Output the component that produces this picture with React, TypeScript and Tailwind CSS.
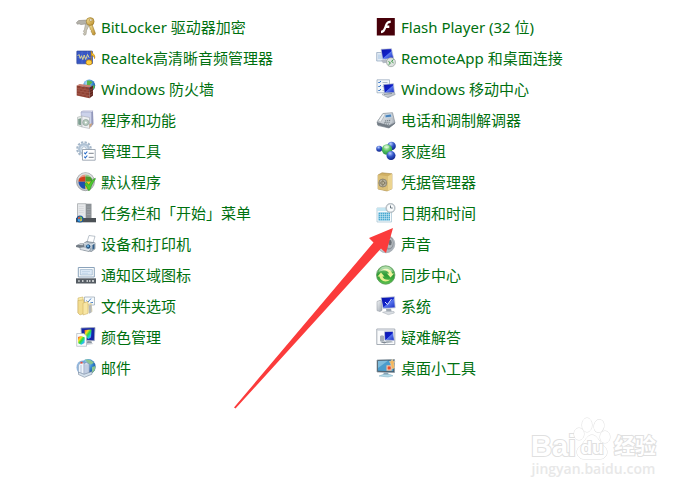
import type { ReactNode } from "react";

type Item = { label: string; icon: ReactNode };

function Icon({ children }: { children: ReactNode }) {
  return (
    <svg viewBox="0 0 20 20" className="size-5 shrink-0" aria-hidden="true">
      {children}
    </svg>
  );
}

function SharedGradients() {
  return (
    <svg className="absolute size-0" aria-hidden="true">
      <defs>
        <linearGradient id="screen" x1="0" y1="0" x2="1" y2="1">
          <stop offset="0" stopColor="#0a14a8" />
          <stop offset="0.5" stopColor="#1020c8" />
          <stop offset="0.55" stopColor="#5a78ee" />
          <stop offset="1" stopColor="#1426c0" />
        </linearGradient>
        <linearGradient id="silver" x1="0" y1="0" x2="1" y2="1">
          <stop offset="0" stopColor="#f4f6f8" />
          <stop offset="1" stopColor="#9aa2ac" />
        </linearGradient>
        <linearGradient id="gold" x1="0" y1="0" x2="1" y2="1">
          <stop offset="0" stopColor="#f7e6a0" />
          <stop offset="1" stopColor="#b98a26" />
        </linearGradient>
        <linearGradient id="rainbow" x1="0" y1="0" x2="1" y2="1">
          <stop offset="0" stopColor="#f02a3a" />
          <stop offset="0.3" stopColor="#f8e020" />
          <stop offset="0.5" stopColor="#30d840" />
          <stop offset="0.75" stopColor="#20c8f0" />
          <stop offset="1" stopColor="#d028e0" />
        </linearGradient>
        <linearGradient id="syncDisc" x1="0" y1="0" x2="0" y2="1">
          <stop offset="0" stopColor="#8fd082" />
          <stop offset="0.5" stopColor="#2c9a34" />
          <stop offset="1" stopColor="#5cc24c" />
        </linearGradient>
        <radialGradient id="globe" cx="0.35" cy="0.3" r="0.8">
          <stop offset="0" stopColor="#c8ecff" />
          <stop offset="0.5" stopColor="#3d93d8" />
          <stop offset="1" stopColor="#0c3d8c" />
        </radialGradient>
        <radialGradient id="blueBall" cx="0.4" cy="0.25" r="0.8">
          <stop offset="0" stopColor="#b8ccff" />
          <stop offset="0.45" stopColor="#3458c8" />
          <stop offset="1" stopColor="#0a1c80" />
        </radialGradient>
        <radialGradient id="greenBall" cx="0.45" cy="0.3" r="0.8">
          <stop offset="0" stopColor="#d0f8c4" />
          <stop offset="0.5" stopColor="#4cbc5c" />
          <stop offset="1" stopColor="#1c8440" />
        </radialGradient>
      </defs>
    </svg>
  );
}

const keys = (
  <Icon>
    <path d="M.3 5.800 2.500 3.600l8.500-.6v3.800L5 7.600 3 6.800 1.500 7.300z" fill="#b4b2aa" stroke="#807d74" strokeWidth=".5" />
    <path d="m9.500 7 3.500 1.500-2.500 5-.5 4-1.800.8-.9-1.600.9-1.200-.8-1.300 1-1.500z" fill="#c9c5b6" stroke="#8f8b7c" strokeWidth=".5" />
    <path d="m13 7 3 .3 3.500 9.300-1.200 1.600-1.900-.7-.2-1.600-1-.8.1-1.600-1-1z" fill="url(#gold)" stroke="#8c6a1c" strokeWidth=".5" />
    <circle cx="14.200" cy="4.500" r="3.900" fill="url(#gold)" stroke="#94701e" strokeWidth=".6" />
    <ellipse cx="14.800" cy="3" rx="1.500" ry="1" fill="#fff" stroke="#94701e" strokeWidth=".5" />
  </Icon>
);

const audio = (
  <Icon>
    <rect x=".8" y="3" width="15.700" height="12.800" rx=".6" fill="#3857c4" stroke="#294090" strokeWidth=".6" />
    <path d="M1.500 9.500h15M6 3.500v12M11.500 3.500v12" stroke="#5e7cdc" strokeWidth=".5" />
    <path d="m1.500 8 1.500-1.500 1.200 4 1.300-2.800 1.300 4 1.400-4.700 1.500 4.500 1.800-5 1.500 3" fill="none" stroke="#e8dc8c" strokeWidth=".9" />
    <path d="M15.300 3v10.500M15.300 3c.3 2.500 4.500 3.500 3.200 7.500 0-2-1.600-3-3.200-3.500" fill="#ffc928" stroke="#c98a10" strokeWidth=".8" />
    <ellipse cx="13" cy="14.400" rx="3" ry="2.600" fill="#ffd040" stroke="#b97808" strokeWidth=".7" />
  </Icon>
);

const firewall = (
  <Icon>
    <circle cx="13.200" cy="6.600" r="6" fill="url(#globe)" />
    <path d="M11 1.800c2.500-1 4.500.2 5.500 1.700l-2 1.800-1.500 2-2.200-1.500zM16 7l2.500-1 .2 2.500-2 2.500z" fill="#58b44c" />
    <path d="m.7 6.500 3-1.500 12 1.500-2.200 2z" fill="#c98272" />
    <path d="m.7 6.500 12.800 2v10.800L.7 16.500z" fill="#8e4032" />
    <path d="m13.500 8.500 3.500-1.700v9.700l-3.500 2.800z" fill="#5f241c" />
    <path d="m1 9.300 12.500 2 3.500-1.700M1 11.800l12.500 2 3.500-1.800M1 14.400l12.500 2.300 3.500-2.100M5 7.500v2.300m4-1.600v2.300M3 9.800v2.200m4-1.500v2.300m4-1.700v2.300M5 12.500v2.300m4-1.700v2.500M3 14.800V17m4-1.500v2.300m4-1.500v2.500" fill="none" stroke="#b87464" strokeWidth=".4" />
  </Icon>
);

const programs = (
  <Icon>
    <path d="m5 2 2-1.200h10L15.500 2.500z" fill="#e5e7f5" stroke="#a8abc8" strokeWidth=".5" />
    <path d="M5 2h10.500v14.500L6 15z" fill="#ccd2ea" stroke="#8e95b8" strokeWidth=".5" />
    <path d="m15.500 2.500 1.500-1.500.5 13-2 2.500z" fill="#9298bc" />
    <path d="M1.500 7.200 6 6v11l-4.500-1.500z" fill="#e6eae8" stroke="#9aa6a0" strokeWidth=".5" />
    <path d="M2.200 9 5 8.300v7l-2.800-.8z" fill="#7e9e90" />
    <path d="m6 6 7.500 1.500v11L6 17z" fill="#eef0f2" stroke="#9ca0aa" strokeWidth=".5" />
    <circle cx="9.800" cy="12.500" r="3.100" fill="#b4c8bc" stroke="#7b8c86" strokeWidth=".5" />
    <circle cx="9.800" cy="12.500" r="1" fill="#fff" />
    <path d="m13.500 14 3-.8-2.300 4.500-.7.800z" fill="#caa37c" />
  </Icon>
);

const tools = (
  <Icon>
    <circle cx="8" cy="8" r="6.800" fill="none" stroke="#a4b6c8" strokeWidth="2" strokeDasharray="2.300 1.300" />
    <circle cx="8" cy="8" r="4.800" fill="#dbe6f0" stroke="#b0c2d4" strokeWidth="2.400" />
    <circle cx="8" cy="8" r="2.200" fill="#fff" stroke="#8ba2b8" strokeWidth=".6" />
    <path d="M6.500 8.500h12.700v10.700H6.500z" fill="#fff" stroke="#8a97a4" strokeWidth=".8" />
    <path d="m8.300 11.700 1 1.200 2-2.400M8.300 15.700l1 1.200 2-2.400" fill="none" stroke="#276cc8" strokeWidth="1.100" />
    <path d="M12.700 12.300h5M12.700 16.300h5" stroke="#6d7680" strokeWidth=".9" />
  </Icon>
);

const defaults = (
  <Icon>
    <circle cx="9.500" cy="9.700" r="9" fill="#c4c7ca" stroke="#8c9094" strokeWidth=".7" />
    <path d="M9.500 9.700H2.500c0-4 3-7.200 7-7.200z" fill="#d2401e" />
    <path d="M9.500 9.700h7c0-4-3-7.200-7-7.200z" fill="#4a9c30" />
    <path d="M9.500 9.700h-7c0 4 3 7.200 7 7.200z" fill="#1e50b0" />
    <path d="M9.500 9.700h7c0 4-3 7.200-7 7.200z" fill="#f4c428" />
    <path d="M1.500 7C3 2.500 6.500 1 9.500 1s6.500 1.500 8 5.500C12.500 3.500 6.500 3.700 1.500 7z" fill="#fff" opacity=".45" />
    <path d="m8.500 12 2.300-1.600 2 2.800C14 10.500 16.500 7.500 19.200 6.200l.3.800c-2.500 3-4.200 7-5.700 11.200l-1.500.2C11.500 15.800 10.200 13.800 8.500 12z" fill="#4ecb31" stroke="#1e821a" strokeWidth=".5" />
  </Icon>
);

const taskbar = (
  <Icon>
    <path d="M1.500.700h8.500v15H1.500z" fill="#e6e8ea" stroke="#9ca1a5" strokeWidth=".7" />
    <path d="M10 .7h5.500v15H10z" fill="#8c9195" />
    <path d="M11 4h3.500M11 6.500h3.500M11 9h3.500M11 11.500h3.500" stroke="#a5abaf" strokeWidth=".7" />
    <path d="M2.800 3.500h5M2.800 5.500h5M2.800 7.500h5M2.800 9.500h5" stroke="#d3d6d8" strokeWidth=".7" />
    <path d="M0 15h20v4.300H0z" fill="#4c5156" />
    <circle cx="4" cy="16" r="3.500" fill="#185a9e" />
    <path d="M1.800 15.700h2v-2.200C2.500 13.700 1.800 14.500 1.800 15.700z" fill="#f06030" />
    <path d="M4.200 15.700h2c0-1.200-.7-2-2-2.200z" fill="#8fce42" />
    <path d="M1.800 16.200h2v2.200C2.500 18.200 1.800 17.400 1.800 16.200z" fill="#58b8f0" />
    <path d="M4.200 16.200h2c0 1.200-.7 2-2 2.200z" fill="#f8cc38" />
  </Icon>
);

const printer = (
  <Icon>
    <path d="m11 8 2-6.500 6 .8-2 7z" fill="#fff" stroke="#8d9aa7" strokeWidth=".6" />
    <path d="m0 11.500 4-2 7-.5v3.500l-7 1.500-4-1z" fill="#747d86" />
    <path d="m1.500 10.800 4-1.300h5l-4 1.800z" fill="#c6ccd1" />
    <path d="m7.500 9.500 3-2 8.500 1.300v6l-3.500 2.700-8-1.500z" fill="#b2bec9" stroke="#5f6b76" strokeWidth=".6" />
    <path d="m7.500 9.500 8.300 1.300 3.200-2" fill="none" stroke="#e9eff3" strokeWidth=".8" />
    <path d="m4 13.500 4-.5 7 1.500-2 3-9-2z" fill="#dce2e8" stroke="#6f7a84" strokeWidth=".5" />
    <circle cx="12.200" cy="12.500" r="2.600" fill="#27547f" stroke="#dde7ef" strokeWidth=".7" />
    <circle cx="12" cy="12.200" r="1.100" fill="#69aee0" />
    <path d="m16.500 11 1.800-1v4.500l-1.800 1.300z" fill="#315d89" />
  </Icon>
);

const tray = (
  <Icon>
    <path d="M2.300 2.500h16v9.500h-16z" fill="#fafcfd" stroke="#8ba3bb" strokeWidth="1" />
    <path d="M4.300 4.500h12V10h-12z" fill="#dbe8f5" stroke="#91abc4" strokeWidth=".6" />
    <path d="M6 6.500h8M6 8.300h6" stroke="#b4cbe0" strokeWidth=".6" />
    <path d="M0 13.300h20v5.200H0z" fill="#555c63" />
    <path d="M0 13.500h20" stroke="#8b9196" strokeWidth=".7" />
    <path d="M2.200 15.300h1.500v1.500H2.200zM6 15.300h1.500v1.500H6zM10.500 15.300H12v1.500h-1.500zM13 15.300h1.500v1.500H13zM16 15.300h2v1.500h-2z" fill="#e7eaec" />
  </Icon>
);

const folder = (
  <Icon>
    <path d="m2 2 5-1 .7 14.500L2 17z" fill="#f9edb0" stroke="#c5a64f" strokeWidth=".5" />
    <path d="M8.500 1h10v8h-10z" fill="#f6fafc" stroke="#8496a5" strokeWidth=".6" />
    <path d="m10.500 4.500 1.500 1.600 3-3.600M14.500 6.500h2.500" fill="none" stroke="#3976c8" strokeWidth=".9" />
    <path d="m12 8 3.500-1.500 1 9-4 1.700z" fill="#e0d6ac" />
    <path d="m2 4.500 5.500-.7.500 3 2-.3v10L4 19l-2-2z" fill="#f2dc90" stroke="#c4a654" strokeWidth=".5" />
    <path d="m7 7 5-1.500v12L7 19z" fill="#f8e6a4" stroke="#c9aa58" strokeWidth=".5" />
    <path d="m13 9.500 2.500-1v8L13 17.700z" fill="#b4b8ba" />
  </Icon>
);

const colors = (
  <Icon>
    <path d="m5 1 14-.5-.7 13.200-12.500-.6z" fill="#1424a8" stroke="#9ba5b8" strokeWidth=".8" />
    <path d="m8.500 3 7-.5-.5 8-2.500 1.500-3.500-2z" fill="url(#rainbow)" />
    <path d="m11.500 14 4 .2.500 2-6 .6z" fill="#8a949d" />
    <path d="m9.500 16.500 6.500-.5 1.500 1-7 1z" fill="#c9ced4" />
    <path d="M.7 6.500h7.300L10.500 9v10.300H.7z" fill="#f9fbfc" stroke="#a2acb6" strokeWidth=".6" />
    <path d="m2 10 3.300-1 3.500 1.500-.3 5.500-3.200 1.800-3.100-1.600z" fill="url(#rainbow)" />
  </Icon>
);

const mail = (
  <Icon>
    <circle cx="12" cy="8.700" r="7.600" fill="url(#globe)" />
    <path d="M9 1.700c4-1 7 .5 8.800 3L15 6.500l-3-1.200zM16 9l3.400-1c.3 3-1 5.500-3.400 7z" fill="#89c491" />
    <ellipse cx="6.500" cy="9.500" rx="6" ry="7" fill="#6c9cd0" opacity=".75" />
    <path d="m2.500 7 3-2.700 3 1.200v11l-6-1.800z" fill="#eef4fb" stroke="#8da0b9" strokeWidth=".5" />
    <path d="m8 5.500 2.500-1.200 2.800 1.900v10.500L8 18z" fill="#d6e0ef" stroke="#6b7fa4" strokeWidth=".6" />
    <path d="M10 6.500v10M12 6.300v10M5 7v8" stroke="#7f95b8" strokeWidth=".5" />
    <path d="m2.500 14 5.500 2.300 8-2.800v2.700L8.500 19.300l-6-2.800z" fill="#d5e1ed" stroke="#66788f" strokeWidth=".5" />
    <path d="M4.500 3.800h2v1.800h-2z" fill="#e94a3b" />
  </Icon>
);

const flash = (
  <Icon>
    <path d="M.8 1h18v17.500H.8z" fill="#470009" />
    <path d="M14.700 3.500v2.600c-2-.1-2.800.7-3.500 2.400h2.100v2.400h-3.100c-1.100 3-2.300 5-5.200 5.300v-2.500c2.100-.5 2.800-2.200 3.600-4.500C9.700 6.200 10.900 3.600 14.700 3.500z" fill="#fff" />
  </Icon>
);

const remote = (
  <Icon>
    <path d="M.7 4.500h9V13h-9z" fill="#e2ebf4" stroke="#8ea4bc" strokeWidth=".7" />
    <path d="M2 6.500h6V11H2z" fill="#c3d7ec" />
    <path d="m5 1.200 10.500-.5 2.200 9.800-11 .8z" fill="url(#screen)" stroke="#c7cdd7" strokeWidth=".7" />
    <path d="m5 12 6-.5 2 3-6 .8z" fill="#b4bac4" />
    <circle cx="15" cy="14.200" r="4.500" fill="#dde2df" stroke="#98a29d" strokeWidth=".7" />
    <path d="m12.500 13.500 2 1.500-2 1.800M17.500 11.500l-2 1.800 2 1.500" fill="none" stroke="#3a9b44" strokeWidth="1" />
  </Icon>
);

const mobility = (
  <Icon>
    <path d="M1 .8h12.500v13H1z" fill="#f4f8fb" stroke="#90a4b8" strokeWidth=".7" />
    <path d="m2.300 3 1 1 1.500-2M2.300 7l1 1 1.500-2M2.300 11l1 1 1.500-2" fill="none" stroke="#2c70c8" strokeWidth="1" />
    <path d="M6.500 3.500h5M6.500 7.500h3M6.500 11.500h3" stroke="#9bacbc" strokeWidth=".8" />
    <path d="m7.500 5.500 10-.8.900 9-10 .4z" fill="url(#screen)" stroke="#bac3ce" strokeWidth=".7" />
    <path d="m6 15.500 3-1.500 9.500-.3.700 1.800-7.200 3.200z" fill="url(#silver)" stroke="#8794a2" strokeWidth=".5" />
    <path d="m8 15.500 8-1" stroke="#68747e" strokeWidth=".7" />
  </Icon>
);

const phone = (
  <Icon>
    <path d="m1 12 6-8.500 9.500-.8L19 13l-6 5-11-2.500z" fill="url(#silver)" stroke="#727c86" strokeWidth=".6" />
    <path d="m2 11 5-7.500 2.500.5-4.800 8.200z" fill="#edf0f2" stroke="#8b949b" strokeWidth=".5" />
    <path d="m9 5 6-1 .8 3-6.500.8z" fill="#4681bb" stroke="#dae6ee" strokeWidth=".6" />
    <path d="m8.500 10 7.500-1 .7 3-3.700 3-6-1z" fill="#c5ccd2" />
    <path d="m9 11 6-.8M8.500 12.500l6-.3M8 14l5 .2" stroke="#5f6970" strokeWidth=".8" strokeDasharray="1.200 .8" />
    <path d="m1 12 12 3.500 6-3v1.300L13 18 1.500 15z" fill="#747d86" />
  </Icon>
);

const homegroup = (
  <Icon>
    <circle cx="3.200" cy="7.800" r="3" fill="url(#blueBall)" />
    <circle cx="15.500" cy="5" r="4.300" fill="url(#blueBall)" />
    <circle cx="11" cy="8.500" r="5.200" fill="url(#greenBall)" />
    <circle cx="15" cy="14.600" r="4.500" fill="url(#blueBall)" />
    <ellipse cx="10.500" cy="5.800" rx="2.800" ry="1.500" fill="#fff" opacity=".4" />
  </Icon>
);

const safe = (
  <Icon>
    <path d="m2 3 4-2.200 10 1v15L11 19 2 17z" fill="#d0b064" stroke="#a88a4a" strokeWidth=".6" />
    <path d="m2 3 10 1.300v14.400L2 17z" fill="#dcc078" />
    <path d="m12 4.300 4-2.500v15l-4 2z" fill="#ecd490" />
    <circle cx="6.800" cy="11" r="4" fill="#b9b3a0" stroke="#7a7466" strokeWidth=".7" />
    <circle cx="6.800" cy="11" r="1.800" fill="#f5eed5" stroke="#6f654e" strokeWidth=".7" />
    <path d="M6.800 7.500v7M3.500 11h6.600" stroke="#6f654e" strokeWidth=".6" />
  </Icon>
);

const dateTime = (
  <Icon>
    <path d="M1 5h14.500v14H1z" fill="#f7fbfd" stroke="#a0c0d0" strokeWidth=".7" />
    <path d="M1 5h14.500v3H1z" fill="#c4e6f2" />
    <path d="M2.500 9.500H14v8H2.500z" fill="#48a8d0" />
    <path d="M2.500 11.500H14m-11.500 2H14m-11.500 2H14M4.500 9.500v8m2-8v8m2-8v8m2-8v8m2-8v8" stroke="#d4eef8" strokeWidth=".5" />
    <circle cx="14.500" cy="5" r="4.700" fill="#c1c8ce" stroke="#9da6ad" strokeWidth=".5" />
    <circle cx="14.500" cy="5" r="3.500" fill="#fafcfd" />
    <path d="M14.500 2.500V5h2.200" fill="none" stroke="#5a6872" strokeWidth=".9" />
  </Icon>
);

const sound = (
  <Icon>
    <circle cx="10" cy="10" r="8.800" fill="url(#silver)" stroke="#a4aab0" strokeWidth=".7" />
    <ellipse cx="12.500" cy="9" rx="5.200" ry="6.800" fill="#8d9399" />
    <ellipse cx="13.300" cy="8.700" rx="3.600" ry="5.200" fill="#b4babf" />
    <ellipse cx="14" cy="8.500" rx="1.700" ry="2.700" fill="#6b7177" />
  </Icon>
);

const sync = (
  <Icon>
    <circle cx="9.700" cy="10" r="9.200" fill="url(#syncDisc)" stroke="#5c9a5c" strokeWidth=".8" />
    <path d="M5 5.500C8 3 12 3 14.500 5.500c1 1 1.500 2 1.500 3h2l-3.500 4-3.500-4h2C12.500 6 9 4.500 5 5.500z" fill="#f0f2a0" />
    <path d="M14.500 14.500C11.500 17 7.500 17 5 14.500c-1-1-1.500-2-1.500-3h-2L5 7.500l3.500 4h-2c.5 2.500 4 4 8 3z" fill="#e8f090" />
    <path d="M2.500 7C4 2.500 7 1.500 9.700 1.500S15.500 2.500 17 7C12 4.500 7.500 4.500 2.500 7z" fill="#fff" opacity=".4" />
  </Icon>
);

const system = (
  <Icon>
    <path d="m1 5.500 3-1.200 2 1v9l-2 1.300-3-1z" fill="url(#silver)" stroke="#8b939c" strokeWidth=".5" />
    <path d="m5 1.500 13.500-.7.700 11L7 12.500z" fill="url(#screen)" stroke="#c7cdd6" strokeWidth=".8" />
    <path d="m9 6 2.500 2.500L15.500 3" fill="none" stroke="#dce4ff" strokeWidth="1" />
    <path d="m10 13 5-.3.700 3-5.200.4z" fill="#9fa8b2" />
    <path d="m6.500 16.300 4.500-1 7 .2.300 1.500-6 1.700z" fill="#d9dde2" stroke="#a5acb4" strokeWidth=".5" />
  </Icon>
);

const troubleshoot = (
  <Icon>
    <path d="M.8 2h18v15.500H.8z" fill="#fafbfc" stroke="#929ba4" strokeWidth=".8" />
    <path d="M1.200 3.200h17.200" stroke="#cbd3da" />
    <path d="m4 9 2-.8 2 .8v5l-2 1-2-.8z" fill="#a7afb7" />
    <path d="m8.500 4.700 8.500-.3 1.300 9-9.500-.2z" fill="url(#screen)" stroke="#cad0d8" strokeWidth=".6" />
    <path d="m9.500 13.500 4.500-.3 3.500 2-6.500 1z" fill="#b1b9c1" />
    <path d="m4.500 15.300 4-.8 3 .8-3 1.200z" fill="#7f8994" />
  </Icon>
);

const gadgets = (
  <Icon>
    <path d="m1 2 17.500-.5v13L1 14z" fill="#445664" stroke="#8999a5" strokeWidth=".7" />
    <path d="m2 3 15.300-.5v10.700L2 12.800z" fill="#4a9ccc" />
    <path d="m2 3 10-.3L2 10z" fill="#7ebcdc" />
    <path d="M8 14.500h4l.8 2.300H7z" fill="#89a4b5" />
    <path d="m3 18 4-1.500h7l3 1.300-5 1.200z" fill="#b4dcea" stroke="#7eabc1" strokeWidth=".5" />
    <path d="M10.700 7.500h4.800v5h-4.800z" fill="#f8f3e8" stroke="#e0a87e" strokeWidth=".5" />
    <path d="M11.500 8.300h3.300v3.300h-3.300z" fill="#e84d28" />
    <path d="m16.300 1 .8 2.200 2.100.2-1.400 1.700.7 4.800-2.700 1-1.300-6-1.300-1.200 2-.7z" fill="#f6b65c" stroke="#e3d8bd" strokeWidth=".5" />
  </Icon>
);

const leftItems: Item[] = [
  { label: "BitLocker 驱动器加密", icon: keys },
  { label: "Realtek高清晰音频管理器", icon: audio },
  { label: "Windows 防火墙", icon: firewall },
  { label: "程序和功能", icon: programs },
  { label: "管理工具", icon: tools },
  { label: "默认程序", icon: defaults },
  { label: "任务栏和「开始」菜单", icon: taskbar },
  { label: "设备和打印机", icon: printer },
  { label: "通知区域图标", icon: tray },
  { label: "文件夹选项", icon: folder },
  { label: "颜色管理", icon: colors },
  { label: "邮件", icon: mail },
];

const rightItems: Item[] = [
  { label: "Flash Player (32 位)", icon: flash },
  { label: "RemoteApp 和桌面连接", icon: remote },
  { label: "Windows 移动中心", icon: mobility },
  { label: "电话和调制解调器", icon: phone },
  { label: "家庭组", icon: homegroup },
  { label: "凭据管理器", icon: safe },
  { label: "日期和时间", icon: dateTime },
  { label: "声音", icon: sound },
  { label: "同步中心", icon: sync },
  { label: "系统", icon: system },
  { label: "疑难解答", icon: troubleshoot },
  { label: "桌面小工具", icon: gadgets },
];

function ItemList({ items }: { items: Item[] }) {
  return (
    <ul>
      {items.map((item) => (
        <li key={item.label} className="flex h-[31px] items-center">
          <a href="#" className="flex items-center gap-[5px] whitespace-nowrap text-[#00700f] hover:underline">
            {item.icon}
            <span>{item.label}</span>
          </a>
        </li>
      ))}
    </ul>
  );
}

function Arrow() {
  return (
    <svg
      viewBox="0 0 160 181"
      className="pointer-events-none absolute top-[228px] left-[234px] h-[181px] w-[160px]"
      aria-hidden="true"
    >
      <path d="M159 0 135 10l4.500 4.500L0 179.500l1.500 1L147 20.500l5 4.500z" fill="#fb3b3b" />
    </svg>
  );
}

function Watermark() {
  return (
    <div className="pointer-events-none absolute right-[37px] bottom-[14px] w-[125px] font-['Liberation_Sans','Noto_Sans_CJK_SC',sans-serif] font-bold text-white">
      <div className="flex h-[46px] items-end justify-between [paint-order:stroke_fill] [-webkit-text-stroke:2px_#e0e0e0]">
        <span className="text-[29px] leading-[28px]">Bai</span>
        <span className="relative -ml-[6px] flex h-[46px] w-[38px] items-end justify-center">
          <svg viewBox="0 0 38 46" className="absolute inset-0 h-[46px] w-[38px]" fill="#fff" stroke="#dedede" aria-hidden="true">
            <ellipse cx="6" cy="20" rx="5" ry="6" />
            <ellipse cx="14" cy="11" rx="5" ry="7" />
            <ellipse cx="26" cy="12" rx="5" ry="6.500" transform="rotate(12 26 12)" />
            <ellipse cx="32" cy="23" rx="5" ry="6" />
            <path d="M19 21c4 0 6 4 9 8s6 5 6 9-3 7-7 7H11c-4 0-7-3-7-7s3-5 6-9 5-8 9-8z" />
          </svg>
          <span className="relative text-[19px] leading-[24px]">du</span>
        </span>
        <span className="text-[21px] leading-[28px]">经验</span>
      </div>
      <div className="text-center font-['Open_Sans',sans-serif] text-[14px] leading-[18px] font-semibold text-[#e8e8e8]">
        jingyan.baidu.com
      </div>
    </div>
  );
}

export default function App() {
  return (
    <main className="relative min-h-screen overflow-hidden bg-white font-['Noto_Sans','Noto_Sans_CJK_SC',sans-serif] text-[15px] leading-5">
      <SharedGradients />
      <div className="grid grid-cols-2 pt-[11px] pr-[17px] pl-[76px]">
        <ItemList items={leftItems} />
        <ItemList items={rightItems} />
      </div>
      <Arrow />
      <Watermark />
    </main>
  );
}
